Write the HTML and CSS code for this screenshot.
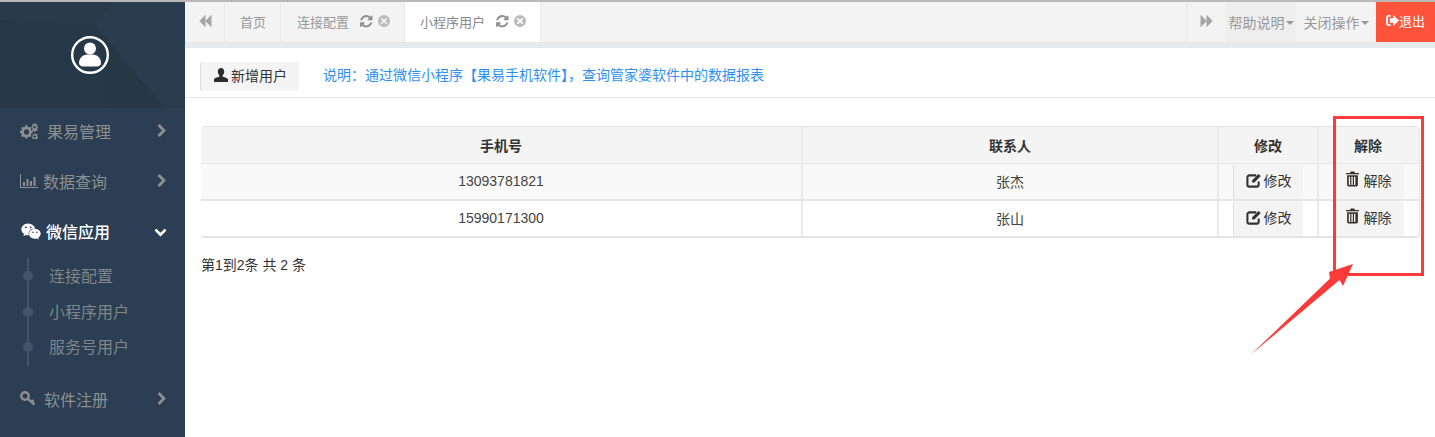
FILE: index.html
```html
<!DOCTYPE html>
<html lang="zh-CN">
<head>
<meta charset="utf-8">
<title>小程序用户</title>
<link rel="stylesheet" href="styles.css">
</head>
<body>
<svg class="sprite" width="0" height="0" aria-hidden="true">
  <defs>
    <symbol id="i-right" viewBox="0 0 1792 1792"><path d="M1363 877l-742 742q-19 19-45 19t-45-19l-166-166q-19-19-19-45t19-45l531-531-531-531q-19-19-19-45t19-45l166-166q19-19 45-19t45 19l742 742q19 19 19 45t-19 45z"/></symbol>
    <symbol id="i-down" viewBox="0 0 1792 1792"><path d="M1683 808l-742 741q-19 19-45 19t-45-19l-742-741q-19-19-19-45.500t19-45.500l166-165q19-19 45-19t45 19l531 531 531-531q19-19 45-19t45 19l166 165q19 19 19 45.500t-19 45.500z"/></symbol>
    <symbol id="i-refresh" viewBox="0 0 1792 1792"><path d="M1639 1056q0 5-1 7-64 268-268 434.500t-478 166.500q-146 0-282.500-55t-243.500-157l-129 129q-19 19-45 19t-45-19-19-45v-448q0-26 19-45t45-19h448q26 0 45 19t19 45-19 45l-137 137q71 66 161 102t187 36q134 0 250-65t186-179q11-17 53-117 8-23 30-23h192q13 0 22.500 9.500t9.500 22.500zm25-800v448q0 26-19 45t-45 19h-448q-26 0-45-19t-19-45 19-45l138-138q-148-137-349-137-134 0-250 65t-186 179q-11 17-53 117-8 23-30 23h-199q-13 0-22.500-9.500t-9.500-22.500v-7q65-268 270-434.500t480-166.500q146 0 284 55.500t245 156.500l130-129q19-19 45-19t45 19 19 45z"/></symbol>
    <symbol id="i-close" viewBox="0 0 16 16"><path fill-rule="evenodd" d="M8 1a7 7 0 1 0 0 14A7 7 0 0 0 8 1zM5.600 4.400 8 6.800l2.400-2.400 1.200 1.200L9.200 8l2.400 2.400-1.200 1.200L8 9.200l-2.400 2.400-1.200-1.200L6.800 8 4.400 5.600z"/></symbol>
    <symbol id="i-back" viewBox="0 0 1792 1792"><path d="M1683 141q19-19 32-13t13 32v1472q0 26-13 32t-32-13l-710-710q-9-9-13-19v710q0 26-13 32t-32-13l-710-710q-19-19-19-45t19-45l710-710q19-19 32-13t13 32v710q4-10 13-19z"/></symbol>
    <symbol id="i-fwd" viewBox="0 0 1792 1792"><path d="M109 1651q-19 19-32 13t-13-32v-1472q0-26 13-32t32 13l710 710q9 9 13 19v-710q0-26 13-32t32 13l710 710q19 19 19 45t-19 45l-710 710q-19 19-32 13t-13-32v-710q-4 10-13 19z"/></symbol>
    <symbol id="i-wechat" viewBox="0 0 2048 1792"><path d="M580 461q0-41-25-66t-66-25q-43 0-76 25.500t-33 65.500q0 39 33 64.500t76 25.500q41 0 66-24.500t25-65.500zm743 507q0-28-25.500-50t-65.500-22q-27 0-49.500 22.500t-22.500 49.500q0 28 22.500 50.500t49.500 22.500q40 0 65.500-22t25.500-51zm-236-507q0-41-24.500-66t-65.500-25q-43 0-76 25.500t-33 65.500q0 39 33 64.500t76 25.500q41 0 65.500-24.500t24.500-65.500zm635 507q0-28-26-50t-65-22q-27 0-49.500 22.500t-22.500 49.500q0 28 22.500 50.500t49.500 22.500q39 0 65-22t26-51zm-266-397q-31-4-70-4-169 0-311 77t-223.500 208.500-81.500 287.500q0 78 23 152-35 3-68 3-26 0-50-1.500t-55-6.500-44.500-7-54.500-10.500-50-10.500l-253 127 72-218q-290-203-290-490 0-169 97.500-311t264-223.500 363.500-81.500q176 0 332.500 66t262 182.500 136.500 260.500zm592 561q0 117-68.500 223.500t-185.500 193.500l55 181-199-109q-150 37-218 37-169 0-311-70.500t-223.500-191.500-81.500-264 81.500-264 223.500-191.500 311-70.500q161 0 303 70.500t227.500 191.500 85.500 264z"/></symbol>
    <symbol id="i-cogs" viewBox="0 0 18 16"><path fill-rule="evenodd" d="M6 3l1.300.2.500 1.500 1.300.7 1.400-.6 1 1.100-.7 1.400.5 1.300 1.500.5v1.600l-1.500.5-.5 1.300.7 1.400-1 1.100-1.400-.6-1.300.7-.5 1.300H5.300l-.5-1.300-1.300-.7-1.400.6-1-1.100.7-1.400-.5-1.300L0 10.700V9.100l1.500-.5.500-1.300-.7-1.400 1-1.100 1.400.6 1.300-.7.500-1.500zm.5 4.300a2.600 2.600 0 1 0 0 5.200 2.600 2.600 0 0 0 0-5.200z" transform="translate(0 -1)"/><path fill-rule="evenodd" d="M14.500 0l.8.200.2 1 .8.400.9-.4.500.8-.6.800.1.900.8.500v.9l-.8.500-.1.900.6.800-.5.800-.9-.4-.8.400-.2 1h-1l-.2-1-.8-.4-.9.400-.5-.8.600-.8-.1-.9-.8-.5v-.9l.8-.5.1-.9-.6-.8.5-.8.900.4.800-.4.200-1zm.1 2.900a1.300 1.300 0 1 0 0 2.600 1.300 1.300 0 0 0 0-2.600z"/><path fill-rule="evenodd" d="M14.500 10l.8.200.2.900.8.400.9-.4.500.8-.6.800.1.800.8.500v.9l-.8.500-.1.600-.5 1h-3.200l-.5-1-.1-.6-.8-.5v-.9l.8-.5.100-.8-.6-.8.5-.8.900.4.800-.4.200-.9zm.1 2.600a1.200 1.200 0 1 0 0 2.400 1.200 1.200 0 0 0 0-2.400z"/></symbol>
    <symbol id="i-chart" viewBox="0 0 18 14"><path d="M0 0h1v13h17v1H0z"/><path d="M3 8h2v4H3zM6.500 5h2v7h-2zM10 7h2v5h-2zM13.500 3h2v9h-2z"/></symbol>
    <symbol id="i-key" viewBox="0 0 16 16"><g fill="none" stroke="currentColor" stroke-width="2.400"><circle cx="5" cy="5" r="3.700"/><path d="M7.800 7.800 14.500 13.500M11.500 11l2-2"/></g></symbol>
    <symbol id="i-user" viewBox="0 0 16 16"><path d="M8 1c2 0 3.200 1.500 3.200 3.600 0 1.600-.7 3-1.500 3.700v1.300c.6.700 4.300 1.200 5.300 2.700V15H1v-2.700c1-1.500 4.700-2 5.300-2.700V8.300c-.8-.7-1.500-2.100-1.500-3.700C4.800 2.500 6 1 8 1z"/></symbol>
    <symbol id="i-logout" viewBox="0 0 14 12"><path d="M5 1H3a2 2 0 0 0-2 2v6a2 2 0 0 0 2 2h2" fill="none" stroke="currentColor" stroke-width="2"/><path d="M8 0l6 6-6 6V8.500H4v-5h4z"/></symbol>
    <symbol id="i-edit" viewBox="0 0 16 16"><path d="M11 2.500H3.500a2 2 0 0 0-2 2v8a2 2 0 0 0 2 2h8a2 2 0 0 0 2-2V9" fill="none" stroke="currentColor" stroke-width="2.200"/><path d="M13.400 1 15.700 3.300 9 10H6.500V7.600z"/></symbol>
    <symbol id="i-trash" viewBox="0 0 14 16"><path d="M5 0h4l.6 1.500H14V3H0V1.500H4.400z"/><path fill-rule="evenodd" d="M1.200 4h11.600v10.500a1.500 1.500 0 0 1-1.500 1.500H2.700a1.500 1.500 0 0 1-1.500-1.500zM3 5.500v9h1.500v-9zm2.800 0v9h1.500v-9zm2.800 0v9h1.500v-9z"/></symbol>
  </defs>
</svg>

<div class="app">
  <aside class="sidebar">
    <div class="profile">
      <svg class="profile-bg" viewBox="0 0 185 106" preserveAspectRatio="none" aria-hidden="true">
        <path d="M0 0h112L95 23 0 18z" fill="#293b4b"/>
        <path d="M112 0h73v106h-21L95 23z" fill="#2a3d4e"/>
        <path d="M95 23 164 106H110z" fill="#263846"/>
      </svg>
      <svg class="avatar" viewBox="0 0 38 38" aria-hidden="true">
        <circle cx="19" cy="19" r="17.800" fill="none" stroke="#fff" stroke-width="2.400"/>
        <circle cx="19" cy="12.500" r="6" fill="#fff"/>
        <path d="M8 27c0-5 4-8.500 8-8.500h6c4 0 8 3.500 8 8.500 0 2-2 3.500-4 3.500H12c-2 0-4-1.500-4-3.500z" fill="#fff"/>
      </svg>
    </div>
    <nav class="menu">
      <a class="menu-item"><svg class="mi cogs"><use href="#i-cogs"/></svg><span class="mt wide">果易管理</span><svg class="arrow"><use href="#i-right"/></svg></a>
      <a class="menu-item"><svg class="mi chart"><use href="#i-chart"/></svg><span class="mt">数据查询</span><svg class="arrow"><use href="#i-right"/></svg></a>
      <a class="menu-item active"><svg class="mi wechat"><use href="#i-wechat"/></svg><span class="mt">微信应用</span><svg class="arrow"><use href="#i-down"/></svg></a>
      <ul class="submenu">
        <li>连接配置</li>
        <li>小程序用户</li>
        <li>服务号用户</li>
      </ul>
      <a class="menu-item"><svg class="mi key"><use href="#i-key"/></svg><span class="mt">软件注册</span><svg class="arrow"><use href="#i-right"/></svg></a>
    </nav>
  </aside>

  <main class="main">
    <header class="tabs">
      <button class="tab-nav left"><svg class="nav-ic"><use href="#i-back"/></svg></button>
      <div class="tab home">首页</div>
      <div class="tab conn">连接配置<svg class="ref"><use href="#i-refresh"/></svg><svg class="cls"><use href="#i-close"/></svg></div>
      <div class="tab current">小程序用户<svg class="ref"><use href="#i-refresh"/></svg><svg class="cls"><use href="#i-close"/></svg></div>
      <div class="tab-spacer"></div>
      <button class="tab-nav right"><svg class="nav-ic"><use href="#i-fwd"/></svg></button>
      <div class="tab-menu help">帮助说明<i class="caret"></i></div>
      <div class="tab-menu closing">关闭操作<i class="caret"></i></div>
      <div class="logout"><svg class="logout-ic"><use href="#i-logout"/></svg>退出</div>
    </header>

    <section class="toolbar">
      <button class="btn add"><svg class="add-ic"><use href="#i-user"/></svg>新增用户</button>
      <p class="note">说明：通过微信小程序【果易手机软件】，查询管家婆软件中的数据报表</p>
    </section>

    <section class="content">
      <table class="grid">
        <colgroup><col class="c1"><col class="c2"><col class="c3"><col class="c4"></colgroup>
        <thead>
          <tr><th>手机号</th><th>联系人</th><th>修改</th><th>解除</th></tr>
        </thead>
        <tbody>
          <tr class="odd">
            <td>13093781821</td><td>张杰</td>
            <td class="cell-btn"><button class="btn act"><svg class="edit-ic"><use href="#i-edit"/></svg>修改</button></td>
            <td class="cell-btn"><button class="btn act"><svg class="trash-ic"><use href="#i-trash"/></svg>解除</button></td>
          </tr>
          <tr>
            <td>15990171300</td><td>张山</td>
            <td class="cell-btn"><button class="btn act"><svg class="edit-ic"><use href="#i-edit"/></svg>修改</button></td>
            <td class="cell-btn"><button class="btn act"><svg class="trash-ic"><use href="#i-trash"/></svg>解除</button></td>
          </tr>
        </tbody>
      </table>
      <p class="count">第1到2条 共 2 条</p>
    </section>
  </main>
</div>

<div class="callout-box"></div>
<svg class="callout-arrow" viewBox="0 0 110 100" aria-hidden="true">
  <path d="M2 92.500 L81 16.500 L80 10 L104 2 L94 24 L90.500 18 Z" fill="#fb3a3a"/>
</svg>
</body>
</html>
```
FILE: styles.css
```css
* { box-sizing: border-box; }
html, body { margin: 0; height: 100%; overflow: hidden; }
body {
  font-family: "Liberation Sans", "Noto Sans CJK SC", sans-serif;
  font-size: 14px;
  color: #333;
  background: #fff;
  border-top: 2px solid #b9b9b9;
}
.sprite { position: absolute; }
svg { fill: currentColor; display: block; }

.app { display: flex; height: 435px; }

/* sidebar */
.sidebar { width: 185px; flex: none; background: #2c3e53; color: #8d9091; }
.profile {
  position: relative;
  height: 106px;
  background: #273948;
  display: flex;
  justify-content: center;
  padding: 34px 5px 0 0;
}
.profile-bg { position: absolute; inset: 0; width: 100%; height: 100%; }
.avatar { position: relative; width: 38px; height: 38px; }
.menu { display: block; }
.menu-item {
  height: 50px;
  display: flex;
  align-items: center;
  padding: 0 18px 4px 20px;
  font-size: 16px;
}
.menu-item.active { color: #fff; font-weight: 500; }
.mi { flex: none; }
.mi.cogs { width: 18px; height: 16px; margin-right: 9px; }
.mi.chart { width: 18px; height: 14px; margin-right: 5px; }
.mi.wechat { width: 20px; height: 17px; margin-left: 1px; margin-right: 5px; }
.mi.key { width: 16px; height: 16px; margin-right: 8px; }
.mt { flex: 1; }
.arrow { width: 14px; height: 14px; flex: none; margin-right: -2px; }
.menu-item.active .arrow { width: 13px; height: 13px; margin-right: 0; }
.submenu {
  position: relative;
  list-style: none;
  margin: 0 0 11px;
  padding: 0 0 0 49px;
  display: grid;
  grid-auto-rows: 35.700px;
  font-size: 16px;
  color: #7f8588;
}
.submenu::before {
  content: "";
  position: absolute;
  left: 27px;
  top: 0;
  width: 2px;
  height: 108px;
  background: #42556a;
}
.submenu li { position: relative; display: flex; align-items: center; padding-bottom: 2px; }
.submenu li::before {
  content: "";
  position: absolute;
  left: -26px;
  top: calc(50% - 5px);
  width: 10px;
  height: 10px;
  border-radius: 50%;
  background: #42556a;
}

/* tab strip */
.main { flex: 1; min-width: 0; display: flex; flex-direction: column; }
.tabs {
  height: 46px;
  flex: none;
  display: flex;
  background: #f3f3f3;
  border-bottom: 6px solid #e7eaec;
  font-size: 13px;
  color: #999;
  align-items: stretch;
}
.tab-nav {
  width: 40px;
  border: 0;
  background: transparent;
  padding: 0 0 2px;
  display: flex;
  align-items: center;
  justify-content: center;
  color: #a5a5a5;
}
.tab-nav.left { border-right: 1px solid #e9e9e9; }
.tab-nav.right { border-left: 1px solid #e9e9e9; }
.nav-ic { width: 14px; height: 14px; }
.tab {
  display: flex;
  align-items: center;
  padding: 0 0 2px 15px;
  border-right: 1px solid #e9e9e9;
}
.tab.home { width: 56px; }
.tab.conn { width: 124px; padding-left: 16px; }
.tab.current { width: 136px; background: #fff; color: #888; }
.ref { width: 14.500px; height: 14.500px; margin-left: 9.500px; color: #8f8f8f; flex: none; }
.cls { width: 14px; height: 14px; margin-left: 4px; color: #bdbdbd; flex: none; }
.tab-spacer { flex: 1; }
.tab-menu {
  display: flex;
  align-items: center;
  justify-content: center;
  color: #999;
  font-size: 14px;
}
.tab-menu.help { width: 70px; background: #eeeeee; }
.tab-menu.closing { width: 80px; }
.caret {
  width: 0;
  height: 0;
  margin-left: 1px;
  margin-top: 2px;
  border-left: 4px solid transparent;
  border-right: 4px solid transparent;
  border-top: 4px solid #999;
}
.logout {
  width: 59px;
  background: #ff533b;
  color: #fff;
  display: flex;
  align-items: center;
  justify-content: center;
  padding-bottom: 4px;
}
.logout-ic { width: 13px; height: 11px; }

/* toolbar */
.toolbar {
  height: 50px;
  flex: none;
  display: flex;
  align-items: flex-start;
  padding: 14px 15px 0;
  border-bottom: 1px solid #e7e7e7;
}
.btn {
  font-family: inherit;
  color: #333;
  background: #f4f4f4;
  border: 0;
  border-left: 1px solid #dcdcdc;
  border-radius: 3px;
  display: inline-flex;
  align-items: center;
  justify-content: center;
  padding: 0 0 2px;
}
.btn.add { width: 99px; height: 29px; font-size: 14px; padding-bottom: 4px; }
.add-ic { width: 16px; height: 16px; margin-right: 2px; color: #2c2c2c; }
.note { margin: 0 0 0 24px; font-size: 14px; line-height: 27px; color: #2f8ff0; }

/* table */
.content { padding: 28px 16px 0; }
.grid {
  width: 1218px;
  table-layout: fixed;
  border-collapse: separate;
  border-spacing: 0;
  border: 1px solid #e3e3e3;
  border-left: 0;
  border-bottom-width: 2px;
  border-radius: 4px;
}
.c1 { width: 602px; }
.c2 { width: 416px; }
.c3 { width: 100px; }
.c4 { width: 100px; }
th, td {
  text-align: center;
  border-right: 2px solid #eaeaea;
  font-weight: normal;
}
th:last-child, td:last-child { border-right: 0; }
th {
  height: 37px;
  padding: 0 0 1px;
  background: #f4f4f4;
  font-weight: 700;
  font-size: 14px;
  border-bottom: 1px solid #e7e7e7;
}
th:last-child { padding-right: 2px; }
td { height: 35px; padding: 0 0 1px; color: #444; }
td.cell-btn { padding: 0; line-height: 0; }
tbody tr.odd td { height: 37px; background: #f9f9f9; border-bottom: 2px solid #e5e5e5; }
.btn.act { width: 70px; height: 35px; font-size: 14px; line-height: 20px; vertical-align: top; }
.edit-ic { width: 15px; height: 15px; margin-right: 3px; color: #333; }
.trash-ic { width: 13px; height: 16px; margin: -3px 5px 0 -2px; color: #3a3028; }
.count { margin: 16px 0 0; font-size: 14px; }

/* annotation */
.callout-box {
  position: absolute;
  left: 1333px;
  top: 116px;
  width: 91px;
  height: 160px;
  border: 3px solid #fb3a3a;
}
.callout-arrow {
  position: absolute;
  left: 1249px;
  top: 262px;
  width: 110px;
  height: 100px;
}
```
